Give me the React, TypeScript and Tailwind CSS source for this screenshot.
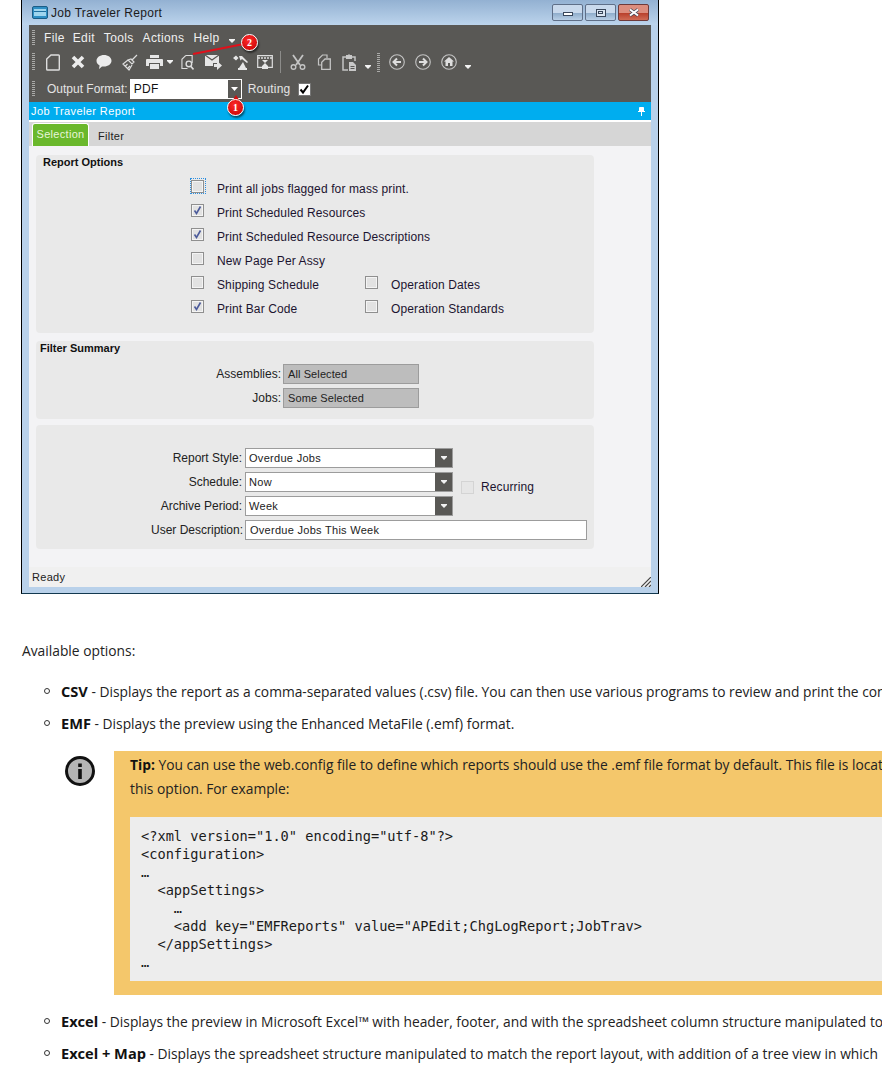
import React from "react";

const ui = "font-['Liberation_Sans',Arial,sans-serif]";
const page = "font-['Open_Sans','Noto_Sans',sans-serif]";

const Grip = ({ className }: { className: string }) => (
  <div
    className={`w-[3px] bg-[repeating-linear-gradient(to_bottom,#aaaaa8_0,#aaaaa8_1px,transparent_1px,transparent_2px)] ${className}`}
  />
);

const Caret = ({ className }: { className: string }) => (
  <svg viewBox="0 0 6 4" className={`h-[4px] w-[6px] ${className}`}>
    <path d="M0 0h6v1l-3 3-3-3z" fill="#f2f2f2" />
  </svg>
);

const Icon = ({ className, children, box, dim }: { className: string; children: React.ReactNode; box: string; dim?: boolean }) => (
  <svg
    viewBox={box}
    fill="none"
    stroke={dim ? "#c4c4c4" : "#dedede"}
    strokeWidth="1.4"
    className={`shrink-0 ${className}`}
  >
    {children}
  </svg>
);

const Check = ({ on, focus, faded, label, className }: { on?: boolean; focus?: boolean; faded?: boolean; label: string; className?: string }) => (
  <div className={`flex items-center ${className ?? ""}`}>
    <div
      className={`relative h-[13px] w-[13px] shrink-0 border ${
        faded ? "border-[#d4d4d4] bg-[#e6e6e6]" : "mb-[5px] border-[#8f8f8f] bg-[#e2e2e2] shadow-[inset_0_0_0_1px_#f4f4f4]"
      }`}
    >
      {on && (
        <svg viewBox="0 0 11 11" className="absolute inset-0">
          <path d="M2.5 5.5l2 3 4-7" fill="none" stroke="#4c5b9b" strokeWidth="1.6" />
        </svg>
      )}
      {focus && (
        <div className="absolute left-[-2px] top-[-3px] h-[16px] w-[16px] border border-dotted border-[#2d8fe0]" />
      )}
    </div>
    <span className="ml-[13px] text-[12px] tracking-[0.12px] text-[#1c1430] whitespace-nowrap">{label}</span>
  </div>
);

const Combo = ({ value }: { value: string }) => (
  <div className="flex h-[20px] w-[208px] border border-[#9c9c9c] bg-white">
    <span className="flex-1 pl-[3px] text-[11px] leading-[18px] tracking-[0.3px] text-[#222]">{value}</span>
    <div className="flex w-[17px] items-center justify-center bg-[#595855]">
      <svg viewBox="0 0 6 4" className="h-[4px] w-[6px]">
        <path d="M0 0h6v1l-3 3-3-3z" fill="#f2f2f2" />
      </svg>
    </div>
  </div>
);

const FormLabel = ({ text, className }: { text: string; className: string }) => (
  <span className={`text-right text-[12px] leading-[20px] text-[#222] whitespace-nowrap ${className}`}>
    {text}
  </span>
);

const Badge = ({ n, className }: { n: string; className: string }) => (
  <div
    className={`absolute flex h-[17px] w-[17px] items-center justify-center rounded-full border border-white bg-[radial-gradient(circle_at_45%_35%,#ff2a2a,#c40000)] text-[10px] font-bold leading-none text-white shadow-[1px_2px_2px_rgba(0,0,0,0.55)] font-['Liberation_Serif',serif] ${className}`}
  >
    {n}
  </div>
);

const WinButton = ({ className, children }: { className: string; children: React.ReactNode }) => (
  <div className={`flex h-[17px] w-[31px] items-center justify-center rounded-[2px] border border-[#5f6f88] ${className}`}>
    {children}
  </div>
);

const Bullet = () => <span className="mr-[11px] mt-[9px] h-[6px] w-[6px] shrink-0 rounded-full border border-[#333]" />;

const ListLine = ({ title, children }: { title: string; children: React.ReactNode }) => (
  <div className="ml-[44px] flex h-[24px] whitespace-nowrap">
    <Bullet />
    <p>
      <b className="text-[14.6px] font-bold text-[#111]">{title}</b> - {children}
    </p>
  </div>
);

const code = `<?xml version="1.0" encoding="utf-8"?>
<configuration>
…
  <appSettings>
    …
    <add key="EMFReports" value="APEdit;ChgLogReport;JobTrav>
  </appSettings>
…`;

export default function App() {
  return (
    <div className="relative h-[1071px] w-[882px] overflow-hidden bg-white">
      {/* report window */}
      <div className={`relative ml-[21px] flex h-[594px] w-[638px] flex-col border-x border-b border-x-black border-b-[#12384f] bg-[#b9d1ea] ${ui}`}>
        <div className="flex h-[25px] items-center bg-[linear-gradient(to_bottom,#93b1d2,#bcd4ec)]">
          <svg viewBox="0 0 16 13" className="ml-[10px] h-[13px] w-[16px]">
            <rect x="0.5" y="0.5" width="15" height="12" rx="1.5" fill="#2f8fc4" stroke="#1c5d86" />
            <rect x="2" y="3" width="12" height="7" fill="#9fd5ee" />
            <rect x="2" y="5" width="12" height="1" fill="#1f6f9f" />
          </svg>
          <span className="ml-[3px] text-[12px] tracking-[0.3px] text-[#1b1b1b]">Job Traveler Report</span>
          <div className="ml-auto mr-[9px] flex gap-[2px]">
            <WinButton className="bg-[linear-gradient(to_bottom,#c9d9ec_50%,#8fadcb_55%,#b9cfe6)]">
              <div className="mt-[3px] h-[4px] w-[10px] border border-[#39465a] bg-white" />
            </WinButton>
            <WinButton className="bg-[linear-gradient(to_bottom,#c9d9ec_50%,#8fadcb_55%,#b9cfe6)]">
              <div className="flex h-[8px] w-[10px] items-center justify-center border border-[#39465a] bg-[#dbe6f2]">
                <div className="h-[3px] w-[5px] border border-[#39465a]" />
              </div>
            </WinButton>
            <WinButton className="border-[#6e3a3a] bg-[linear-gradient(to_bottom,#dc8d7e_50%,#b9402c_55%,#cf6b55)]">
              <svg viewBox="0 0 12 8" className="h-[9px] w-[12px]">
                <path d="M2 1l8 6M10 1l-8 6" stroke="#39465a" strokeWidth="3.4" />
                <path d="M2 1l8 6M10 1l-8 6" stroke="#fff" strokeWidth="2" />
              </svg>
            </WinButton>
          </div>
        </div>

        <div className="mx-[7px] flex flex-1 flex-col">
          {/* toolbars */}
          <div className="h-[77px] bg-[#595855] text-[#f0f0f0]">
            <div className="flex h-[25px] items-center text-[12px] tracking-[0.35px]">
              <Grip className="ml-[3px] h-[16px]" />
              <span className="ml-[9px]">File</span>
              <span className="ml-[8px]">Edit</span>
              <span className="ml-[9px]">Tools</span>
              <span className="ml-[9px]">Actions</span>
              <span className="ml-[9px]">Help</span>
              <Caret className="ml-[9px] mt-[7px]" />
            </div>
            <div className="flex h-[24px] items-center">
              <Grip className="ml-[3px] h-[18px]" />
              <Icon box="0 0 14 17" className="ml-[11px] h-[17px] w-[14px]">
                <path d="M5 1h7.500a.8.8 0 01.8.8v13.400a.8.8 0 01-.8.8h-11a.8.8 0 01-.8-.8V5z" />
              </Icon>
              <Icon box="0 0 14 14" className="ml-[11px] h-[14px] w-[14px]">
                <path d="M2 2l10 10M12 2L2 12" strokeWidth="3.6" stroke="#ececec" />
              </Icon>
              <Icon box="0 0 16 16" className="ml-[11px] h-[16px] w-[16px]">
                <path d="M8 1c4 0 7.500 2.400 7.500 5.800S12 12.600 8 12.600c-.7 0-1.300 0-2-.2L3 15l.6-3.600C1.600 10.400.5 8.800.5 6.800.5 3.400 4 1 8 1z" fill="#ececec" stroke="none" />
              </Icon>
              <Icon box="0 0 16 17" className="ml-[10px] h-[17px] w-[16px]">
                <path d="M15 1l-5 5M9 5l3 3-2 2-4-4zM6 6L1 10l6 6 3-5M3.500 12l2-2M6 14l2-2" strokeWidth="1.200" />
              </Icon>
              <Icon box="0 0 17 14" className="ml-[8px] h-[14px] w-[17px]">
                <path d="M4 0h9v3H4zM1 4h15a1 1 0 011 1v6h-3V8H3v3H0V5a1 1 0 011-1zM4 9h9v5H4z" fill="#e6e6e6" stroke="none" />
              </Icon>
              <Caret className="ml-[4px]" />
              <Icon box="0 0 14 17" className="ml-[8px] h-[17px] w-[13px]">
                <path d="M5 1h7v8M5 1L1 5v10h6" strokeWidth="1.200" />
                <circle cx="8.500" cy="10" r="3" strokeWidth="1.500" />
                <path d="M10.500 12.500l3 3.500" strokeWidth="1.800" />
              </Icon>
              <Icon box="0 0 17 16" className="ml-[11px] h-[16px] w-[17px]">
                <path d="M0 1h14v8H8v3H0z" fill="#e6e6e6" stroke="none" />
                <path d="M0 1l7 5 7-5" stroke="#595855" strokeWidth="1.200" />
                <path d="M9 10h3V7l5 4.500-5 4.500v-3H9z" fill="#e6e6e6" stroke="none" />
              </Icon>
              <Icon box="0 0 15 16" className="ml-[11px] h-[16px] w-[15px]">
                <path d="M0 4l3-2.500L5.500 4 3 6.500zM6 2h3l6 6-1 1-5-4-1.500 1.500z" fill="#e6e6e6" stroke="none" />
                <path d="M10 8l3 6H6z M5 14h9v2H5z" fill="#e6e6e6" stroke="none" />
              </Icon>
              <Icon box="0 0 16 15" className="ml-[9px] h-[15px] w-[16px]">
                <path d="M.7.7h14.600v11.600H.7z" strokeWidth="1.200" />
                <path d="M1 3h14" strokeDasharray="2 1" />
                <path d="M5 5h6L8 8l3 3v3H5v-3l3-3z" fill="#e6e6e6" stroke="none" />
              </Icon>
              <div className="ml-[7px] h-[22px] w-px bg-[#8c8c8a]" />
              <Icon dim box="0 0 16 16" className="ml-[9px] h-[16px] w-[16px]">
                <path d="M3 1l7 10M13 1L6 11" strokeWidth="1.800" />
                <circle cx="3.500" cy="13" r="2.300" />
                <circle cx="12.500" cy="13" r="2.300" />
              </Icon>
              <Icon dim box="0 0 14 16" className="ml-[11px] h-[16px] w-[14px]">
                <path d="M4 11H1.500V5l4-4h4.500v3" strokeWidth="1.200" />
                <path d="M8 5h5.300v10.300H4.700V8.300z" strokeWidth="1.300" />
              </Icon>
              <Icon dim box="0 0 14 17" className="ml-[11px] h-[17px] w-[14px]">
                <path d="M4 3H1v13h5M10 3h3v4" strokeWidth="1.500" />
                <path d="M4 1h2l1-1 1 1h2v4H4z" fill="#c8c8c8" stroke="none" />
                <path d="M7 8h4l3 3v6H7z" fill="#c8c8c8" stroke="none" />
                <path d="M8.500 12.500h4M8.500 14.500h4" stroke="#595855" strokeWidth="1" />
              </Icon>
              <Caret className="ml-[9px] mt-[10px]" />
              <Grip className="ml-[6px] h-[19px]" />
              <Icon dim box="0 0 16 16" className="ml-[9px] h-[16px] w-[16px]">
                <circle cx="8" cy="8" r="7.300" strokeWidth="1.100" />
                <path d="M12 8H5M8 4.500L4.500 8 8 11.500" strokeWidth="2" stroke="#dedede" />
              </Icon>
              <Icon dim box="0 0 16 16" className="ml-[10px] h-[16px] w-[16px]">
                <circle cx="8" cy="8" r="7.300" strokeWidth="1.100" />
                <path d="M4 8h7M8 4.500L11.500 8 8 11.500" strokeWidth="2" stroke="#dedede" />
              </Icon>
              <Icon dim box="0 0 16 16" className="ml-[10px] h-[16px] w-[16px]">
                <circle cx="8" cy="8" r="7.300" strokeWidth="1.100" />
                <path d="M8 3l5 4.500h-1.500V12H9V9H7v3H4.500V7.500H3z" fill="#dedede" stroke="none" />
              </Icon>
              <Caret className="ml-[8px] mt-[10px]" />
            </div>
            <div className="mt-[5px] flex h-[20px] items-center">
              <Grip className="ml-[3px] h-[16px]" />
              <span className="ml-[12px] text-[12px] text-[#e4e4e4]">Output Format:</span>
              <div className="ml-[2px] flex h-[20px] w-[112px] bg-white">
                <span className="flex-1 pl-[4px] text-[12px] leading-[20px] tracking-[0.3px] text-[#111]">PDF</span>
                <div className="flex w-[15px] items-center justify-center border border-white bg-[#595855]">
                  <svg viewBox="0 0 7 4" className="h-[4px] w-[7px]">
                    <path d="M0 0h7L3.500 4z" fill="#fff" />
                  </svg>
                </div>
              </div>
              <span className="ml-[6px] text-[12px] tracking-[0.2px] text-[#e4e4e4]">Routing</span>
              <div className="ml-[8px] h-[13px] w-[13px] border border-[#777] bg-white">
                <svg viewBox="0 0 11 11">
                  <path d="M1.500 5.500l2.500 3 5-7" fill="none" stroke="#000" strokeWidth="2" />
                </svg>
              </div>
            </div>
          </div>

          <div className="flex h-[18px] items-center justify-between bg-[#00adef] pl-[2px] pr-[6px] text-[11px] tracking-[0.4px] text-white">
            <span>Job Traveler Report</span>
            <svg viewBox="0 0 7 9" className="h-[9px] w-[7px]">
              <path d="M1.500 .5h4v4h-4zM0 4.500h7M3.500 5v4" fill="#fff" stroke="#fff" />
            </svg>
          </div>

          {/* tabs */}
          <div className="flex h-[26px] items-end border-t-2 border-white bg-[#d6d6d6]">
            <div className="ml-[3px] h-[23px] w-[57px] rounded-t-[3px] border border-b-0 border-white bg-[#6ab82c] text-center text-[11px] leading-[20px] tracking-[0.3px] text-[#e8f5d8]">
              Selection
            </div>
            <span className="ml-[9px] pb-[1px] text-[11px] leading-[18px] tracking-[0.3px] text-[#222]">Filter</span>
          </div>

          {/* content */}
          <div className="flex flex-1 flex-col bg-[#f3f3f5] pl-[7px] pt-[9px]">
            <section className="h-[178px] w-[558px] rounded-[4px] bg-[#e9e9e9]">
              <h3 className="h-[22px] pl-[7px] text-[11px] font-bold leading-[15px] text-[#111]">Report Options</h3>
              <div className="pl-[155px]">
                <Check focus label="Print all jobs flagged for mass print." className="h-[24px]" />
                <Check on label="Print Scheduled Resources" className="h-[24px]" />
                <Check on label="Print Scheduled Resource Descriptions" className="h-[24px]" />
                <Check label="New Page Per Assy" className="h-[24px]" />
                <div className="flex h-[24px]">
                  <Check label="Shipping Schedule" className="w-[174px]" />
                  <Check label="Operation Dates" />
                </div>
                <div className="flex h-[24px]">
                  <Check on label="Print Bar Code" className="w-[174px]" />
                  <Check label="Operation Standards" />
                </div>
              </div>
            </section>

            <section className="mt-[8px] h-[78px] w-[558px] rounded-[4px] bg-[#e9e9e9]">
              <h3 className="h-[23px] pl-[4px] text-[11px] font-bold leading-[15px] text-[#111]">Filter Summary</h3>
              <div className="flex flex-col gap-[4px]">
                <div className="flex">
                  <FormLabel text="Assemblies:" className="mr-[2px] w-[245px]" />
                  <div className="h-[20px] w-[136px] border border-[#9c9c9c] bg-[#bdbdbd] pl-[4px] text-[11px] leading-[18px] tracking-[0.1px] text-[#222]">All Selected</div>
                </div>
                <div className="flex">
                  <FormLabel text="Jobs:" className="mr-[2px] w-[245px]" />
                  <div className="h-[20px] w-[136px] border border-[#9c9c9c] bg-[#bdbdbd] pl-[4px] text-[11px] leading-[18px] tracking-[0.1px] text-[#222]">Some Selected</div>
                </div>
              </div>
            </section>

            <section className="mt-[6px] h-[124px] w-[558px] rounded-[4px] bg-[#e9e9e9] pt-[23px]">
              <div className="flex flex-col gap-[4px]">
                <div className="flex">
                  <FormLabel text="Report Style:" className="mr-[3px] w-[206px]" />
                  <Combo value="Overdue Jobs" />
                </div>
                <div className="flex">
                  <FormLabel text="Schedule:" className="mr-[3px] w-[206px]" />
                  <Combo value="Now" />
                  <Check faded label="Recurring" className="-mb-[2px] ml-[8px] mt-[8px] h-[14px] [&>span]:ml-[7px]" />
                </div>
                <div className="flex">
                  <FormLabel text="Archive Period:" className="mr-[3px] w-[206px]" />
                  <Combo value="Week" />
                </div>
                <div className="flex">
                  <FormLabel text="User Description:" className="mr-[2px] w-[207px]" />
                  <div className="h-[20px] w-[342px] border border-[#9c9c9c] bg-white pl-[4px] text-[11px] leading-[18px] tracking-[0.28px] text-[#222]">
                    Overdue Jobs This Week
                  </div>
                </div>
              </div>
            </section>
          </div>

          <div className="relative h-[20px] bg-[#f0f0f0] pl-[3px] text-[11px] leading-[21px] tracking-[0.3px] text-[#222]">
            Ready
            <svg viewBox="0 0 10 10" className="absolute bottom-0 right-0 h-[10px] w-[10px]">
              <path d="M0 10L10 0M4 10l6-6M8 10l2-2" stroke="#444" strokeWidth="1.200" />
            </svg>
          </div>
        </div>
        <div className="h-[6px]" />

        {/* callouts drawn over the toolbar */}
        <svg viewBox="0 0 70 20" className="absolute left-[165px] top-[38px] h-[20px] w-[70px]">
          <path d="M62 5L6 16" stroke="#e0101a" strokeWidth="1.800" />
        </svg>
        <Badge n="2" className="left-[219px] top-[34px]" />
        <div className="absolute left-[209px] top-[95px] h-0 w-0 border-x-[5px] border-b-[8px] border-x-transparent border-b-[#d80c0c]" />
        <Badge n="1" className="left-[205px] top-[99px]" />
      </div>

      {/* article text */}
      <div className={`text-[13.8px] leading-[24px] text-[#222] ${page}`}>
        <p className="ml-[22px] mt-[45px]">Available options:</p>
        <div className="mt-[16px]">
          <ListLine title="CSV">
            Displays the report as a comma-separated values (.csv) file. You can then use various programs to review and print the contents
          </ListLine>
        </div>
        <div className="mt-[8px]">
          <ListLine title="EMF">Displays the preview using the Enhanced MetaFile (.emf) format.</ListLine>
        </div>

        <div className="mt-[16px] flex">
          <svg viewBox="0 0 32 32" className="ml-[64px] mt-[4px] h-[32px] w-[32px] shrink-0">
            <circle cx="16" cy="16" r="13.500" fill="#b5b5b5" stroke="#111" strokeWidth="3" />
            <rect x="14.200" y="14" width="3.600" height="10" fill="#111" />
            <rect x="14.200" y="8.500" width="3.600" height="3.500" fill="#111" />
          </svg>
          <div className="ml-[18px] w-[900px] shrink-0 bg-[#f4c76b] pb-[14px] pl-[16px] pr-[16px] pt-[2px]">
            <p className="whitespace-nowrap">
              <b className="font-bold text-[#111]">Tip:</b> You can use the web.config file to define which reports should use the .emf file format by default. This file is located
            </p>
            <p>this option. For example:</p>
            <pre className="mt-[16px] h-[164px] bg-[#ededed] pl-[11px] pt-[10px] font-['DejaVu_Sans_Mono',monospace] text-[13.65px] leading-[18px] text-[#1a1a1a]">
              {code}
            </pre>
          </div>
        </div>

        <div className="mt-[14px]">
          <ListLine title="Excel">
            Displays the preview in Microsoft Excel™ with header, footer, and with the spreadsheet column structure manipulated to
          </ListLine>
        </div>
        <div className="mt-[8px]">
          <ListLine title="Excel + Map">
            Displays the spreadsheet structure manipulated to match the report layout, with addition of a tree view in which
          </ListLine>
        </div>
      </div>
    </div>
  );
}
